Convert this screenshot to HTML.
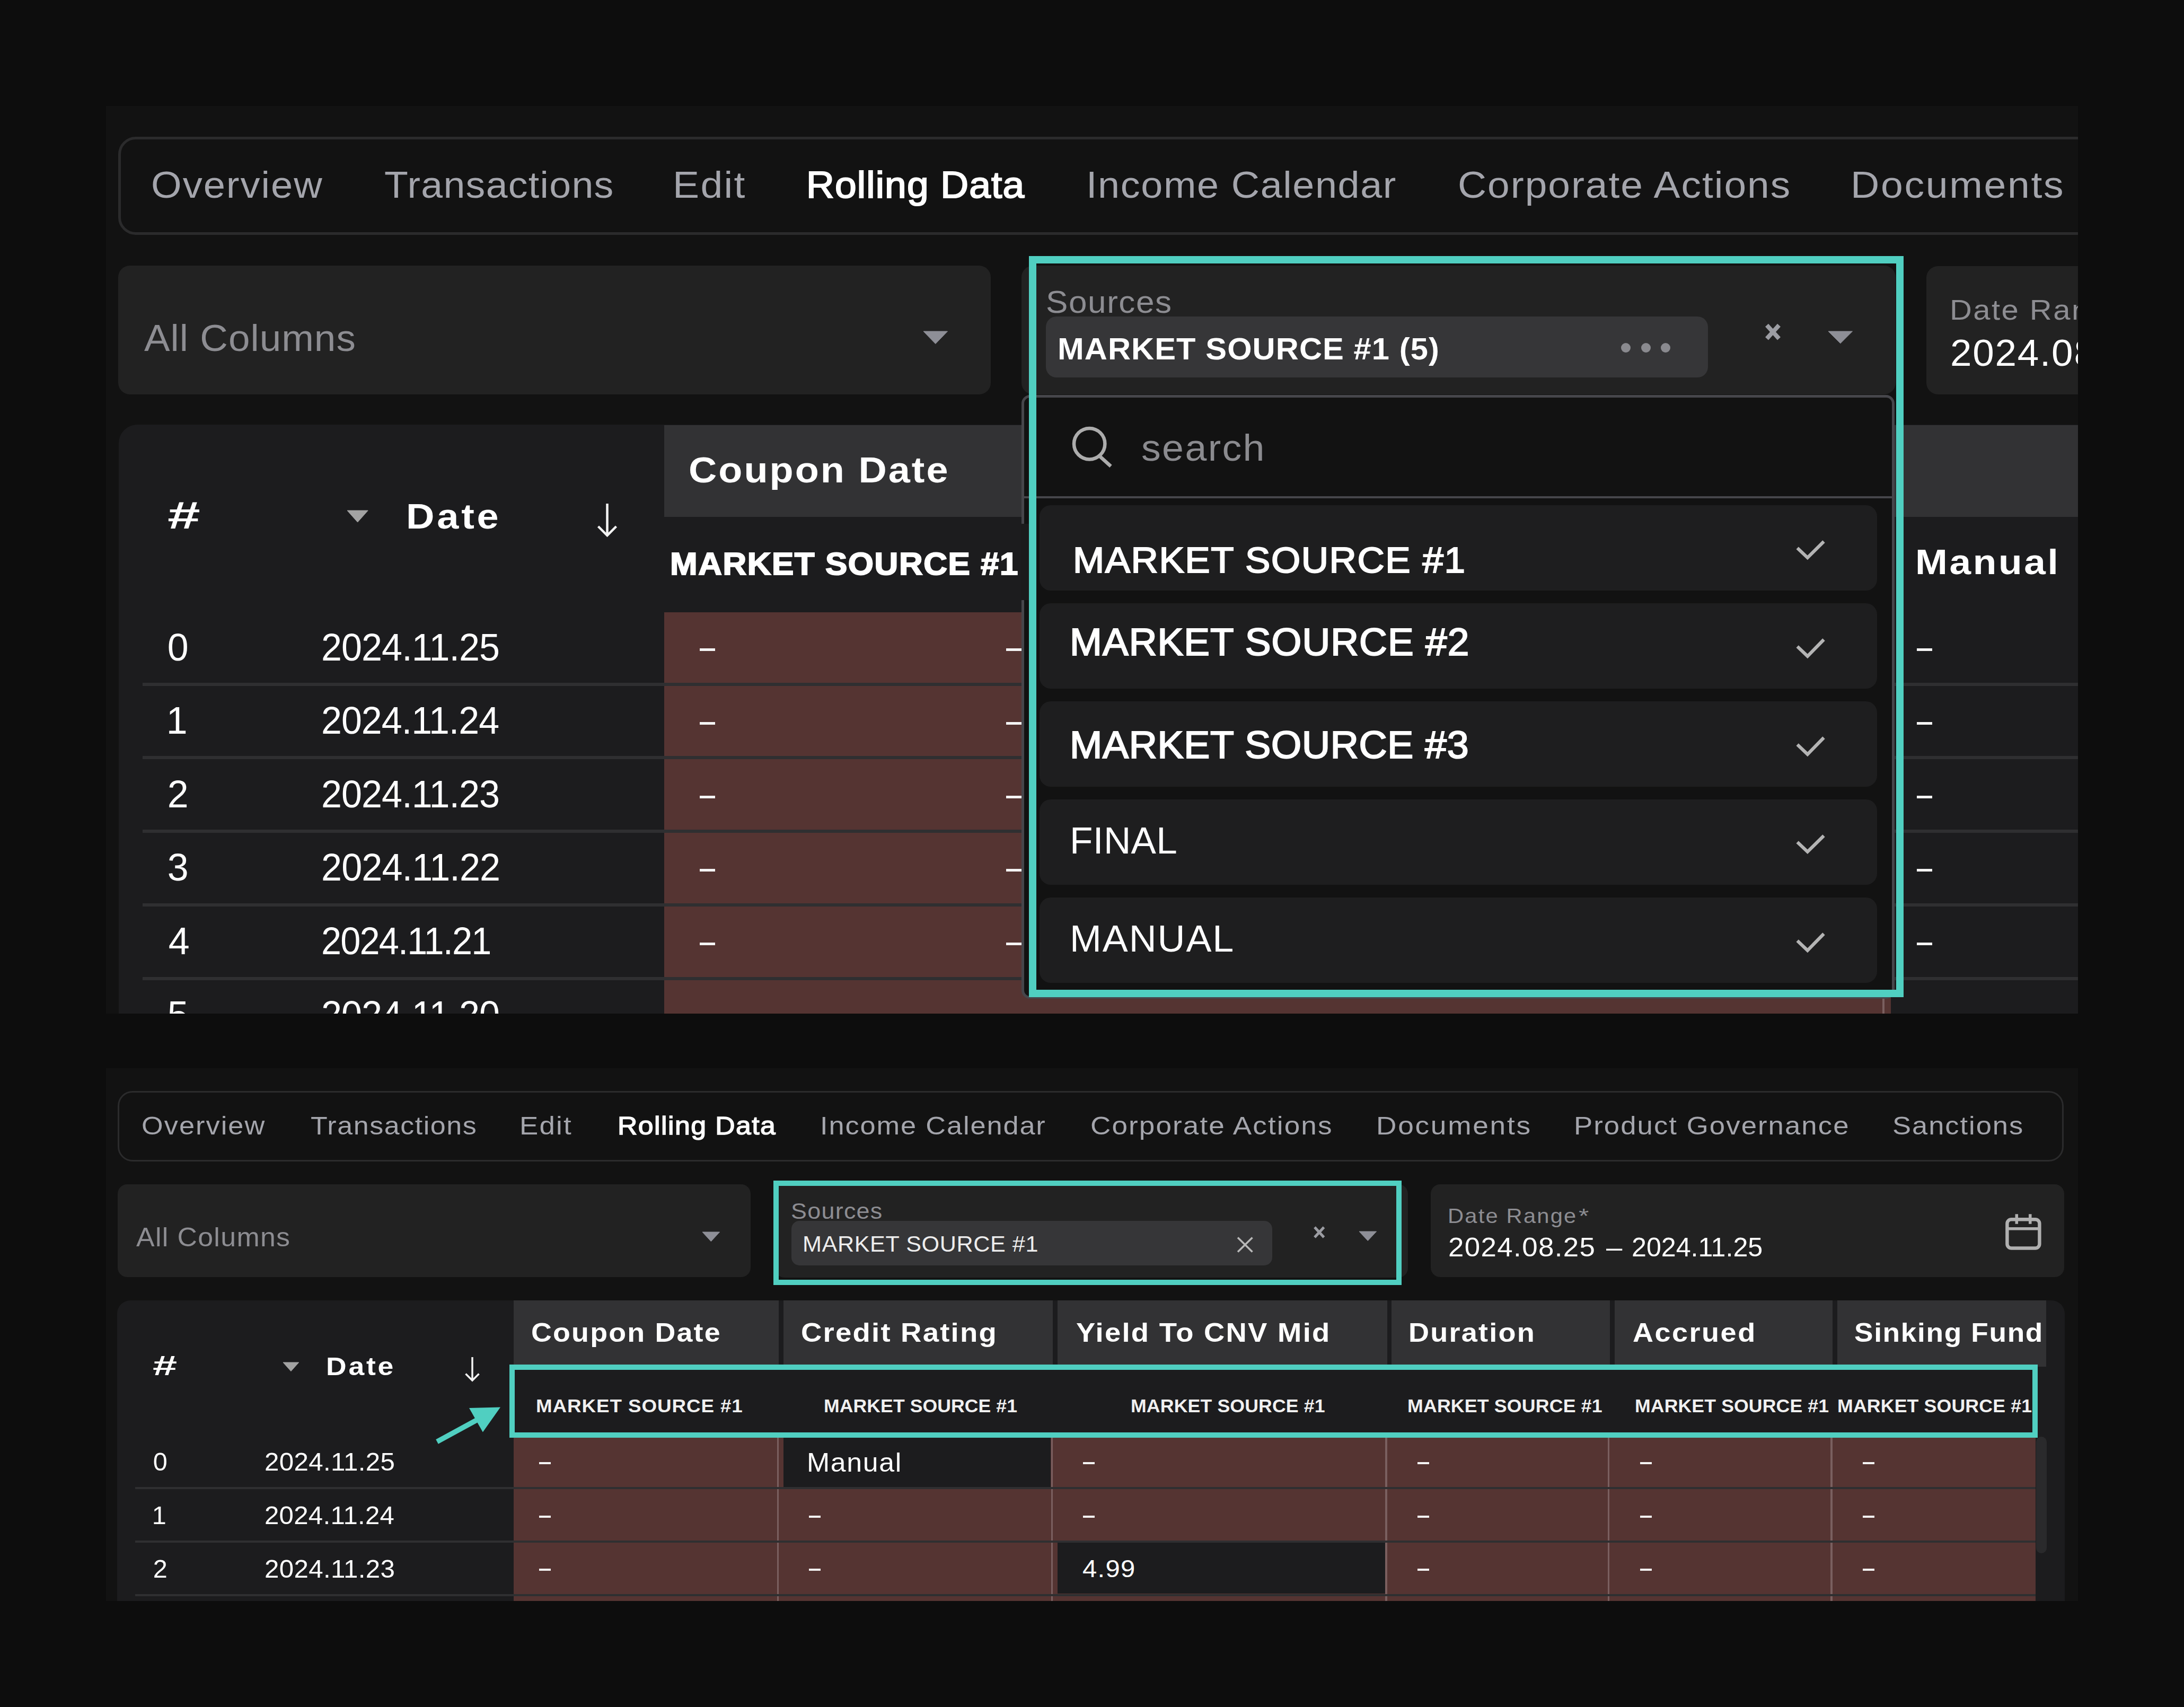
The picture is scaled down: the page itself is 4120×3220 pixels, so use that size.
<!DOCTYPE html>
<html><head><meta charset="utf-8"><style>
html,body{margin:0;padding:0;background:#0d0d0d;width:4120px;height:3220px;overflow:hidden}
.a{position:absolute}
.clip{position:absolute;overflow:hidden}
.off{position:absolute;left:0;top:0}
</style></head><body>
<div class="clip" style="left:200px;top:200px;width:3720px;height:1712px"><div class="off" style="left:-200px;top:-200px">
<div class="a" style="left:200.0px;top:200.0px;width:3720.0px;height:1712.0px;background:#121212;"></div>
<div class="a" style="left:223.0px;top:258.0px;width:3767.0px;height:185.0px;border-radius:33px;box-sizing:border-box;border:5.5px solid #2b2b2c;"></div>
<div class="a" style="left:223.0px;top:501.0px;width:1646.0px;height:243.0px;background:#222222;border-radius:22px;"></div>
<svg class="a" style="left:1740.0px;top:623.0px" width="49.5" height="27.5"><path d="M2 2 L47.5 2 L24.8 25.5 Z" fill="#8e8f97" stroke="#8e8f97" stroke-width="1" stroke-linejoin="round"/></svg>
<div class="a" style="left:1927.0px;top:501.0px;width:1649.0px;height:243.0px;background:#222222;border-radius:22px;"></div>
<div class="a" style="left:1973.4px;top:596.8px;width:1248.6px;height:114.8px;background:#363638;border-radius:20px;"></div>
<div class="a" style="left:3058.0px;top:647.0px;width:18.0px;height:18.0px;background:#8a8a8f;border-radius:9px;"></div>
<div class="a" style="left:3096.0px;top:647.0px;width:18.0px;height:18.0px;background:#8a8a8f;border-radius:9px;"></div>
<div class="a" style="left:3133.0px;top:647.0px;width:18.0px;height:18.0px;background:#8a8a8f;border-radius:9px;"></div>
<svg class="a" style="left:3320.0px;top:600.0px" width="50.0" height="51.0" viewBox="3320 600 50 51"><path d="M3333 613.5 L3356 638.8 M3356 613.5 L3333 638.8" stroke="#9c9da3" stroke-width="8"/></svg>
<svg class="a" style="left:3447.0px;top:623.3px" width="49.5" height="26.7"><path d="M2 2 L47.5 2 L24.8 24.7 Z" fill="#8e8f97" stroke="#8e8f97" stroke-width="1" stroke-linejoin="round"/></svg>
<div class="a" style="left:3634.0px;top:501.5px;width:356.0px;height:242.1px;background:#222222;border-radius:22px;"></div>
<div class="a" style="left:223.5px;top:801.4px;width:3766.5px;height:1188.6px;background:#1c1c1e;border-radius:35px;"></div>
<div class="a" style="left:1253.0px;top:801.5px;width:2667.0px;height:173.0px;background:#323234;"></div>
<div class="a" style="left:1253.0px;top:1154.5px;width:2314.0px;height:757.5px;background:#553432;"></div>
<div class="a" style="left:3551.0px;top:1154.5px;width:4.0px;height:757.5px;background:#7a5f5f;"></div>
<div class="a" style="left:269.0px;top:1287.5px;width:3651.0px;height:6.0px;background:#2f2f31;"></div>
<div class="a" style="left:269.0px;top:1426.4px;width:3651.0px;height:6.0px;background:#2f2f31;"></div>
<div class="a" style="left:269.0px;top:1565.0px;width:3651.0px;height:6.0px;background:#2f2f31;"></div>
<div class="a" style="left:269.0px;top:1704.0px;width:3651.0px;height:6.0px;background:#2f2f31;"></div>
<div class="a" style="left:269.0px;top:1843.0px;width:3651.0px;height:6.0px;background:#2f2f31;"></div>
<svg class="a" style="left:652.5px;top:961.0px" width="43.2" height="26.0"><path d="M2 2 L41.2 2 L21.6 24.0 Z" fill="#a3a3a3" stroke="#a3a3a3" stroke-width="1" stroke-linejoin="round"/></svg>
<svg class="a" style="left:1120.0px;top:940.0px" width="52.0" height="80.0" viewBox="1120 940 52 80"><path d="M1145.5 950 L1145.5 1010 M1128.5 993 L1145.5 1010 L1162.5 993" stroke="#f2f2f2" stroke-width="4.5" fill="none"/></svg>
<div class="a" style="left:1320.0px;top:1222.9px;width:29.0px;height:5.0px;background:#f4f4f4;"></div>
<div class="a" style="left:1898.0px;top:1222.9px;width:29.0px;height:5.0px;background:#f4f4f4;"></div>
<div class="a" style="left:3615.7px;top:1222.9px;width:29.0px;height:5.0px;background:#f4f4f4;"></div>
<div class="a" style="left:1320.0px;top:1361.7px;width:29.0px;height:5.0px;background:#f4f4f4;"></div>
<div class="a" style="left:1898.0px;top:1361.7px;width:29.0px;height:5.0px;background:#f4f4f4;"></div>
<div class="a" style="left:3615.7px;top:1361.7px;width:29.0px;height:5.0px;background:#f4f4f4;"></div>
<div class="a" style="left:1320.0px;top:1500.5px;width:29.0px;height:5.0px;background:#f4f4f4;"></div>
<div class="a" style="left:1898.0px;top:1500.5px;width:29.0px;height:5.0px;background:#f4f4f4;"></div>
<div class="a" style="left:3615.7px;top:1500.5px;width:29.0px;height:5.0px;background:#f4f4f4;"></div>
<div class="a" style="left:1320.0px;top:1639.3px;width:29.0px;height:5.0px;background:#f4f4f4;"></div>
<div class="a" style="left:1898.0px;top:1639.3px;width:29.0px;height:5.0px;background:#f4f4f4;"></div>
<div class="a" style="left:3615.7px;top:1639.3px;width:29.0px;height:5.0px;background:#f4f4f4;"></div>
<div class="a" style="left:1320.0px;top:1778.1px;width:29.0px;height:5.0px;background:#f4f4f4;"></div>
<div class="a" style="left:1898.0px;top:1778.1px;width:29.0px;height:5.0px;background:#f4f4f4;"></div>
<div class="a" style="left:3615.7px;top:1778.1px;width:29.0px;height:5.0px;background:#f4f4f4;"></div>
<div class="a" style="left:1320.0px;top:1916.9px;width:29.0px;height:5.0px;background:#f4f4f4;"></div>
<div class="a" style="left:1898.0px;top:1916.9px;width:29.0px;height:5.0px;background:#f4f4f4;"></div>
<div class="a" style="left:3615.7px;top:1916.9px;width:29.0px;height:5.0px;background:#f4f4f4;"></div>
<div style="position:absolute;left:284.86px;top:313.82px;font-family:'Liberation Sans', sans-serif;font-size:70.80px;line-height:70.80px;font-weight:normal;color:#a4a5ac;white-space:pre;letter-spacing:1.876px;transform:scaleX(1.0471);transform-origin:0 0;">Overview</div>
<div style="position:absolute;left:724.96px;top:313.82px;font-family:'Liberation Sans', sans-serif;font-size:70.80px;line-height:70.80px;font-weight:normal;color:#a4a5ac;white-space:pre;letter-spacing:1.293px;transform:scaleX(1.0370);transform-origin:0 0;">Transactions</div>
<div style="position:absolute;left:1268.64px;top:313.82px;font-family:'Liberation Sans', sans-serif;font-size:70.80px;line-height:70.80px;font-weight:normal;color:#a4a5ac;white-space:pre;letter-spacing:2.201px;transform:scaleX(1.0603);transform-origin:0 0;">Edit</div>
<div style="position:absolute;left:2048.75px;top:313.82px;font-family:'Liberation Sans', sans-serif;font-size:70.80px;line-height:70.80px;font-weight:normal;color:#a4a5ac;white-space:pre;letter-spacing:1.542px;transform:scaleX(1.0423);transform-origin:0 0;">Income Calendar</div>
<div style="position:absolute;left:2749.83px;top:313.82px;font-family:'Liberation Sans', sans-serif;font-size:70.80px;line-height:70.80px;font-weight:normal;color:#a4a5ac;white-space:pre;letter-spacing:1.891px;transform:scaleX(1.0575);transform-origin:0 0;">Corporate Actions</div>
<div style="position:absolute;left:3490.63px;top:313.82px;font-family:'Liberation Sans', sans-serif;font-size:70.80px;line-height:70.80px;font-weight:normal;color:#a4a5ac;white-space:pre;letter-spacing:2.532px;transform:scaleX(1.0614);transform-origin:0 0;">Documents</div>
<div style="position:absolute;left:1521.33px;top:313.82px;font-family:'Liberation Sans', sans-serif;font-size:70.80px;line-height:70.80px;font-weight:normal;color:#ffffff;white-space:pre;letter-spacing:1.122px;-webkit-text-stroke:2.12px #ffffff;transform:scaleX(1.0334);transform-origin:0 0;">Rolling Data</div>
<div style="position:absolute;left:272.00px;top:602.82px;font-family:'Liberation Sans', sans-serif;font-size:70.80px;line-height:70.80px;font-weight:normal;color:#8d8d92;white-space:pre;letter-spacing:1.021px;transform:scaleX(1.0280);transform-origin:0 0;">All Columns</div>
<div style="position:absolute;left:1972.87px;top:539.75px;font-family:'Liberation Sans', sans-serif;font-size:59.47px;line-height:59.47px;font-weight:normal;color:#8d8d92;white-space:pre;letter-spacing:1.493px;transform:scaleX(1.0439);transform-origin:0 0;">Sources</div>
<div style="position:absolute;left:1994.88px;top:630.22px;font-family:'Liberation Sans', sans-serif;font-size:57.97px;line-height:57.97px;font-weight:bold;color:#ffffff;white-space:pre;letter-spacing:1.022px;transform:scaleX(1.0297);transform-origin:0 0;">MARKET SOURCE #1 (5)</div>
<div style="position:absolute;left:3677.69px;top:558.26px;font-family:'Liberation Sans', sans-serif;font-size:53.81px;line-height:53.81px;font-weight:normal;color:#8d8d92;white-space:pre;letter-spacing:2.267px;transform:scaleX(1.0783);transform-origin:0 0;">Date Range</div>
<div style="position:absolute;left:3678.86px;top:631.87px;font-family:'Liberation Sans', sans-serif;font-size:69.57px;line-height:69.57px;font-weight:normal;color:#ffffff;white-space:pre;letter-spacing:1.698px;transform:scaleX(1.0468);transform-origin:0 0;">2024.08.25</div>
<div style="position:absolute;left:316.45px;top:936.54px;font-family:'Liberation Sans', sans-serif;font-size:71.59px;line-height:71.59px;font-weight:bold;color:#ffffff;white-space:pre;letter-spacing:0.000px;transform:scaleX(1.5526);transform-origin:0 0;">#</div>
<div style="position:absolute;left:765.59px;top:940.35px;font-family:'Liberation Sans', sans-serif;font-size:67.12px;line-height:67.12px;font-weight:bold;color:#ffffff;white-space:pre;letter-spacing:4.322px;transform:scaleX(1.1029);transform-origin:0 0;">Date</div>
<div style="position:absolute;left:1298.78px;top:853.11px;font-family:'Liberation Sans', sans-serif;font-size:68.82px;line-height:68.82px;font-weight:bold;color:#ffffff;white-space:pre;letter-spacing:2.845px;transform:scaleX(1.0721);transform-origin:0 0;">Coupon Date</div>
<div style="position:absolute;left:1263.88px;top:1033.97px;font-family:'Liberation Sans', sans-serif;font-size:59.57px;line-height:59.57px;font-weight:bold;color:#ffffff;white-space:pre;letter-spacing:1.520px;-webkit-text-stroke:2.08px #ffffff;transform:scaleX(1.0392);transform-origin:0 0;">MARKET SOURCE #1</div>
<div style="position:absolute;left:3612.67px;top:1026.31px;font-family:'Liberation Sans', sans-serif;font-size:67.40px;line-height:67.40px;font-weight:bold;color:#ffffff;white-space:pre;letter-spacing:3.418px;transform:scaleX(1.0826);transform-origin:0 0;">Manual</div>
<div style="position:absolute;left:315.70px;top:1186.02px;font-family:'Liberation Sans', sans-serif;font-size:71.74px;line-height:71.74px;font-weight:normal;color:#ffffff;white-space:pre;letter-spacing:0.000px;">0</div>
<div style="position:absolute;left:606.07px;top:1186.02px;font-family:'Liberation Sans', sans-serif;font-size:71.74px;line-height:71.74px;font-weight:normal;color:#ffffff;white-space:pre;letter-spacing:-0.939px;transform:scaleX(0.9763);transform-origin:0 0;">2024.11.25</div>
<div style="position:absolute;left:313.70px;top:1324.02px;font-family:'Liberation Sans', sans-serif;font-size:71.74px;line-height:71.74px;font-weight:normal;color:#ffffff;white-space:pre;letter-spacing:0.000px;">1</div>
<div style="position:absolute;left:606.08px;top:1324.02px;font-family:'Liberation Sans', sans-serif;font-size:71.74px;line-height:71.74px;font-weight:normal;color:#ffffff;white-space:pre;letter-spacing:-0.997px;transform:scaleX(0.9749);transform-origin:0 0;">2024.11.24</div>
<div style="position:absolute;left:315.70px;top:1462.52px;font-family:'Liberation Sans', sans-serif;font-size:71.74px;line-height:71.74px;font-weight:normal;color:#ffffff;white-space:pre;letter-spacing:0.000px;">2</div>
<div style="position:absolute;left:606.07px;top:1462.52px;font-family:'Liberation Sans', sans-serif;font-size:71.74px;line-height:71.74px;font-weight:normal;color:#ffffff;white-space:pre;letter-spacing:-0.939px;transform:scaleX(0.9763);transform-origin:0 0;">2024.11.23</div>
<div style="position:absolute;left:315.70px;top:1601.02px;font-family:'Liberation Sans', sans-serif;font-size:71.74px;line-height:71.74px;font-weight:normal;color:#ffffff;white-space:pre;letter-spacing:0.000px;">3</div>
<div style="position:absolute;left:606.07px;top:1601.02px;font-family:'Liberation Sans', sans-serif;font-size:71.74px;line-height:71.74px;font-weight:normal;color:#ffffff;white-space:pre;letter-spacing:-0.881px;transform:scaleX(0.9777);transform-origin:0 0;">2024.11.22</div>
<div style="position:absolute;left:317.70px;top:1740.02px;font-family:'Liberation Sans', sans-serif;font-size:71.74px;line-height:71.74px;font-weight:normal;color:#ffffff;white-space:pre;letter-spacing:0.000px;">4</div>
<div style="position:absolute;left:606.14px;top:1740.02px;font-family:'Liberation Sans', sans-serif;font-size:71.74px;line-height:71.74px;font-weight:normal;color:#ffffff;white-space:pre;letter-spacing:-1.864px;transform:scaleX(0.9539);transform-origin:0 0;">2024.11.21</div>
<div style="position:absolute;left:315.70px;top:1878.52px;font-family:'Liberation Sans', sans-serif;font-size:71.74px;line-height:71.74px;font-weight:normal;color:#ffffff;white-space:pre;letter-spacing:0.000px;">5</div>
<div style="position:absolute;left:606.07px;top:1878.52px;font-family:'Liberation Sans', sans-serif;font-size:71.74px;line-height:71.74px;font-weight:normal;color:#ffffff;white-space:pre;letter-spacing:-0.939px;transform:scaleX(0.9763);transform-origin:0 0;">2024.11.20</div>
<div class="a" style="left:1927.0px;top:745.0px;width:1647.0px;height:1139.0px;background:#121212;border-radius:16px;box-sizing:border-box;border:5.5px solid #46464b;"></div>
<div class="a" style="left:1926.0px;top:988.0px;width:15.0px;height:144.0px;background:#1b1b1c;"></div>
<svg class="a" style="left:2010.0px;top:795.0px" width="100.0" height="95.0" viewBox="2010 795 100 95"><circle cx="2055.2" cy="837.2" r="29.2" stroke="#acacac" stroke-width="6.5" fill="none"/><path d="M2075 861 L2095.5 879.5" stroke="#acacac" stroke-width="6.5"/></svg>
<div class="a" style="left:1930.0px;top:936.0px;width:1641.0px;height:3.5px;background:#46464b;"></div>
<div class="a" style="left:1961.0px;top:952.7px;width:1580.0px;height:161.0px;background:#1e1e1f;border-radius:21px;"></div>
<svg class="a" style="left:3380.0px;top:1008.8px" width="72.0" height="54.2" viewBox="3380 1008.8 72 54.200000000000045"><path d="M3390.6 1033.5 L3409.8 1051.8 L3440.5 1021.3" stroke="#b4b4b4" stroke-width="6.2" fill="none"/></svg>
<div class="a" style="left:1961.0px;top:1137.5px;width:1580.0px;height:161.0px;background:#1e1e1f;border-radius:21px;"></div>
<svg class="a" style="left:3380.0px;top:1194.0px" width="72.0" height="55.0" viewBox="3380 1194 72 55"><path d="M3390.6 1219.5 L3409.8 1237.8 L3440.5 1206.5" stroke="#b4b4b4" stroke-width="6.2" fill="none"/></svg>
<div class="a" style="left:1961.0px;top:1322.7px;width:1580.0px;height:161.0px;background:#1e1e1f;border-radius:21px;"></div>
<svg class="a" style="left:3380.0px;top:1379.0px" width="72.0" height="55.0" viewBox="3380 1379 72 55"><path d="M3390.6 1404.5 L3409.8 1422.8 L3440.5 1391.5" stroke="#b4b4b4" stroke-width="6.2" fill="none"/></svg>
<div class="a" style="left:1961.0px;top:1507.8px;width:1580.0px;height:161.0px;background:#1e1e1f;border-radius:21px;"></div>
<svg class="a" style="left:3380.0px;top:1564.0px" width="72.0" height="54.0" viewBox="3380 1564 72 54"><path d="M3390.6 1588.5 L3409.8 1606.8 L3440.5 1576.5" stroke="#b4b4b4" stroke-width="6.2" fill="none"/></svg>
<div class="a" style="left:1961.0px;top:1693.0px;width:1580.0px;height:161.0px;background:#1e1e1f;border-radius:21px;"></div>
<svg class="a" style="left:3380.0px;top:1749.0px" width="72.0" height="55.0" viewBox="3380 1749 72 55"><path d="M3390.6 1774.5 L3409.8 1792.8 L3440.5 1761.5" stroke="#b4b4b4" stroke-width="6.2" fill="none"/></svg>
<div style="position:absolute;left:2153.38px;top:810.92px;font-family:'Liberation Sans', sans-serif;font-size:69.50px;line-height:69.50px;font-weight:normal;color:#8b8b8f;white-space:pre;letter-spacing:2.221px;transform:scaleX(1.0582);transform-origin:0 0;">search</div>
<div style="position:absolute;left:2023.57px;top:1023.01px;font-family:'Liberation Sans', sans-serif;font-size:68.70px;line-height:68.70px;font-weight:normal;color:#ffffff;white-space:pre;letter-spacing:1.493px;-webkit-text-stroke:2.06px #ffffff;transform:scaleX(1.0337);transform-origin:0 0;">MARKET SOURCE #1</div>
<div style="position:absolute;left:2018.39px;top:1176.27px;font-family:'Liberation Sans', sans-serif;font-size:71.45px;line-height:71.45px;font-weight:normal;color:#ffffff;white-space:pre;letter-spacing:1.043px;-webkit-text-stroke:2.14px #ffffff;transform:scaleX(1.0224);transform-origin:0 0;">MARKET SOURCE #2</div>
<div style="position:absolute;left:2018.43px;top:1369.41px;font-family:'Liberation Sans', sans-serif;font-size:72.46px;line-height:72.46px;font-weight:normal;color:#ffffff;white-space:pre;letter-spacing:0.690px;-webkit-text-stroke:2.17px #ffffff;transform:scaleX(1.0145);transform-origin:0 0;">MARKET SOURCE #3</div>
<div style="position:absolute;left:2018.45px;top:1551.43px;font-family:'Liberation Sans', sans-serif;font-size:70.43px;line-height:70.43px;font-weight:normal;color:#ffffff;white-space:pre;letter-spacing:0.397px;transform:scaleX(1.0084);transform-origin:0 0;">FINAL</div>
<div style="position:absolute;left:2018.30px;top:1736.87px;font-family:'Liberation Sans', sans-serif;font-size:69.57px;line-height:69.57px;font-weight:normal;color:#ffffff;white-space:pre;letter-spacing:1.847px;transform:scaleX(1.0339);transform-origin:0 0;">MANUAL</div>
<div class="a" style="left:1941.0px;top:483.0px;width:1649.5px;height:1397.5px;box-sizing:border-box;border:14.5px solid #50cfc1;"></div>
</div></div>
<div class="clip" style="left:200px;top:2014.5px;width:3720px;height:1005.5px"><div class="off" style="left:-200px;top:-2014.5px">
<div class="a" style="left:200.0px;top:2014.5px;width:3720.0px;height:1005.5px;background:#121212;"></div>
<div class="a" style="left:221.6px;top:2057.5px;width:3671.4px;height:133.0px;border-radius:28px;box-sizing:border-box;border:3.5px solid #2b2b2c;"></div>
<div class="a" style="left:221.6px;top:2233.5px;width:1194.9px;height:175.5px;background:#222222;border-radius:18px;"></div>
<svg class="a" style="left:1323.0px;top:2321.8px" width="36.6" height="21.7"><path d="M2 2 L34.6 2 L18.3 19.7 Z" fill="#8e8f97" stroke="#8e8f97" stroke-width="1" stroke-linejoin="round"/></svg>
<div class="a" style="left:1462.0px;top:2234.0px;width:1194.0px;height:175.5px;background:#222222;border-radius:18px;"></div>
<div class="a" style="left:1492.8px;top:2303.0px;width:907.2px;height:83.7px;background:#363638;border-radius:15px;"></div>
<svg class="a" style="left:2325.0px;top:2325.0px" width="47.0" height="46.0" viewBox="2325 2325 47 46"><path d="M2335 2334.5 L2362.5 2361.5 M2362.5 2334.5 L2335 2361.5" stroke="#b9b9b9" stroke-width="3.6"/></svg>
<svg class="a" style="left:2470.0px;top:2305.0px" width="38.0" height="39.0" viewBox="2470 2305 38 39"><path d="M2480 2315 L2497.5 2334 M2497.5 2315 L2480 2334" stroke="#9c9da3" stroke-width="5"/></svg>
<svg class="a" style="left:2562.4px;top:2321.0px" width="36.6" height="21.4"><path d="M2 2 L34.6 2 L18.3 19.4 Z" fill="#8e8f97" stroke="#8e8f97" stroke-width="1" stroke-linejoin="round"/></svg>
<div class="a" style="left:2699.0px;top:2233.7px;width:1195.0px;height:175.5px;background:#222222;border-radius:18px;"></div>
<svg class="a" style="left:3775.0px;top:2282.0px" width="85.0" height="84.0" viewBox="3775 2282 85 84"><rect x="3786.4" y="2300.2" width="61" height="54.3" rx="8" stroke="#b0b0b0" stroke-width="6.4" fill="none"/><path d="M3786 2317.7 L3848 2317.7 M3804.3 2290.3 L3804.3 2308.7 M3829.8 2290.3 L3829.8 2308.7" stroke="#b0b0b0" stroke-width="5.5"/></svg>
<div class="a" style="left:220.6px;top:2452.7px;width:3674.4px;height:627.3px;background:#1c1c1e;border-radius:25px;"></div>
<div class="a" style="left:969.0px;top:2452.7px;width:499.8px;height:125.3px;background:#323234;"></div>
<div class="a" style="left:1477.8px;top:2452.7px;width:508.2px;height:125.3px;background:#323234;"></div>
<div class="a" style="left:1995.0px;top:2452.7px;width:622.3px;height:125.3px;background:#323234;"></div>
<div class="a" style="left:2625.0px;top:2452.7px;width:412.0px;height:125.3px;background:#323234;"></div>
<div class="a" style="left:3046.0px;top:2452.7px;width:411.4px;height:125.3px;background:#323234;"></div>
<div class="a" style="left:3465.6px;top:2452.7px;width:394.9px;height:125.3px;background:#323234;"></div>
<div class="a" style="left:969.0px;top:2712.0px;width:2871.0px;height:308.0px;background:#553432;"></div>
<div class="a" style="left:1477.8px;top:2712.0px;width:504.7px;height:93.0px;background:#1c1c1e;"></div>
<div class="a" style="left:1995.0px;top:2909.5px;width:618.8px;height:96.2px;background:#1c1c1e;"></div>
<div class="a" style="left:1465.5px;top:2712.0px;width:3.5px;height:308.0px;background:#7a5f5f;"></div>
<div class="a" style="left:1982.5px;top:2712.0px;width:3.5px;height:308.0px;background:#7a5f5f;"></div>
<div class="a" style="left:2613.1px;top:2712.0px;width:3.5px;height:308.0px;background:#7a5f5f;"></div>
<div class="a" style="left:3032.8px;top:2712.0px;width:3.5px;height:308.0px;background:#7a5f5f;"></div>
<div class="a" style="left:3453.2px;top:2712.0px;width:3.5px;height:308.0px;background:#7a5f5f;"></div>
<div class="a" style="left:254.8px;top:2805.0px;width:3585.2px;height:4.0px;background:#2f2f31;"></div>
<div class="a" style="left:254.8px;top:2905.5px;width:3585.2px;height:4.0px;background:#2f2f31;"></div>
<div class="a" style="left:254.8px;top:3006.5px;width:3585.2px;height:4.0px;background:#2f2f31;"></div>
<div class="a" style="left:1017.0px;top:2758.0px;width:22.0px;height:4.0px;background:#f4f4f4;"></div>
<div class="a" style="left:2043.2px;top:2758.0px;width:22.0px;height:4.0px;background:#f4f4f4;"></div>
<div class="a" style="left:2673.7px;top:2758.0px;width:22.0px;height:4.0px;background:#f4f4f4;"></div>
<div class="a" style="left:3093.8px;top:2758.0px;width:22.0px;height:4.0px;background:#f4f4f4;"></div>
<div class="a" style="left:3514.0px;top:2758.0px;width:22.0px;height:4.0px;background:#f4f4f4;"></div>
<div class="a" style="left:1017.0px;top:2858.5px;width:22.0px;height:4.0px;background:#f4f4f4;"></div>
<div class="a" style="left:1525.7px;top:2858.5px;width:22.0px;height:4.0px;background:#f4f4f4;"></div>
<div class="a" style="left:2043.2px;top:2858.5px;width:22.0px;height:4.0px;background:#f4f4f4;"></div>
<div class="a" style="left:2673.7px;top:2858.5px;width:22.0px;height:4.0px;background:#f4f4f4;"></div>
<div class="a" style="left:3093.8px;top:2858.5px;width:22.0px;height:4.0px;background:#f4f4f4;"></div>
<div class="a" style="left:3514.0px;top:2858.5px;width:22.0px;height:4.0px;background:#f4f4f4;"></div>
<div class="a" style="left:1017.0px;top:2959.0px;width:22.0px;height:4.0px;background:#f4f4f4;"></div>
<div class="a" style="left:1525.7px;top:2959.0px;width:22.0px;height:4.0px;background:#f4f4f4;"></div>
<div class="a" style="left:2673.7px;top:2959.0px;width:22.0px;height:4.0px;background:#f4f4f4;"></div>
<div class="a" style="left:3093.8px;top:2959.0px;width:22.0px;height:4.0px;background:#f4f4f4;"></div>
<div class="a" style="left:3514.0px;top:2959.0px;width:22.0px;height:4.0px;background:#f4f4f4;"></div>
<svg class="a" style="left:531.8px;top:2568.0px" width="33.7" height="20.6"><path d="M2 2 L31.7 2 L16.9 18.6 Z" fill="#a3a3a3" stroke="#a3a3a3" stroke-width="1" stroke-linejoin="round"/></svg>
<svg class="a" style="left:870.0px;top:2550.0px" width="42.0" height="62.0" viewBox="870 2550 42 62"><path d="M891 2560 L891 2604 M878.5 2591.5 L891 2604 L903.5 2591.5" stroke="#f2f2f2" stroke-width="3.5" fill="none"/></svg>
<div class="a" style="left:3841.0px;top:2709.5px;width:19.5px;height:220.5px;background:#2a2a2c;border-radius:10px;"></div>
<div class="a" style="left:961.0px;top:2574.0px;width:2882.6px;height:138.0px;box-sizing:border-box;border:10.5px solid #50cfc1;"></div>
<svg class="a" style="left:815.0px;top:2640.0px" width="140.0" height="90.0" viewBox="815 2640 140 90"><path d="M824.5 2719.5 L908 2674" stroke="#50cfc1" stroke-width="9.5"/><path d="M885 2656 L944 2654.5 L910.8 2701.4 Z" fill="#50cfc1"/></svg>
<div style="position:absolute;left:267.36px;top:2099.48px;font-family:'Liberation Sans', sans-serif;font-size:48.85px;line-height:48.85px;font-weight:normal;color:#a4a5ac;white-space:pre;letter-spacing:1.902px;transform:scaleX(1.0705);transform-origin:0 0;">Overview</div>
<div style="position:absolute;left:585.74px;top:2099.48px;font-family:'Liberation Sans', sans-serif;font-size:48.85px;line-height:48.85px;font-weight:normal;color:#a4a5ac;white-space:pre;letter-spacing:1.484px;transform:scaleX(1.0631);transform-origin:0 0;">Transactions</div>
<div style="position:absolute;left:980.27px;top:2099.48px;font-family:'Liberation Sans', sans-serif;font-size:48.85px;line-height:48.85px;font-weight:normal;color:#a4a5ac;white-space:pre;letter-spacing:2.032px;transform:scaleX(1.0825);transform-origin:0 0;">Edit</div>
<div style="position:absolute;left:1547.21px;top:2099.48px;font-family:'Liberation Sans', sans-serif;font-size:48.85px;line-height:48.85px;font-weight:normal;color:#a4a5ac;white-space:pre;letter-spacing:1.750px;transform:scaleX(1.0715);transform-origin:0 0;">Income Calendar</div>
<div style="position:absolute;left:2056.53px;top:2099.48px;font-family:'Liberation Sans', sans-serif;font-size:48.85px;line-height:48.85px;font-weight:normal;color:#a4a5ac;white-space:pre;letter-spacing:1.924px;transform:scaleX(1.0869);transform-origin:0 0;">Corporate Actions</div>
<div style="position:absolute;left:2596.14px;top:2099.48px;font-family:'Liberation Sans', sans-serif;font-size:48.85px;line-height:48.85px;font-weight:normal;color:#a4a5ac;white-space:pre;letter-spacing:2.494px;transform:scaleX(1.0902);transform-origin:0 0;">Documents</div>
<div style="position:absolute;left:2968.68px;top:2099.48px;font-family:'Liberation Sans', sans-serif;font-size:48.85px;line-height:48.85px;font-weight:normal;color:#a4a5ac;white-space:pre;letter-spacing:1.908px;transform:scaleX(1.0792);transform-origin:0 0;">Product Governance</div>
<div style="position:absolute;left:3569.65px;top:2099.48px;font-family:'Liberation Sans', sans-serif;font-size:48.85px;line-height:48.85px;font-weight:normal;color:#a4a5ac;white-space:pre;letter-spacing:1.832px;transform:scaleX(1.0746);transform-origin:0 0;">Sanctions</div>
<div style="position:absolute;left:1164.52px;top:2099.48px;font-family:'Liberation Sans', sans-serif;font-size:48.85px;line-height:48.85px;font-weight:normal;color:#ffffff;white-space:pre;letter-spacing:1.359px;-webkit-text-stroke:1.47px #ffffff;transform:scaleX(1.0600);transform-origin:0 0;">Rolling Data</div>
<div style="position:absolute;left:256.90px;top:2309.41px;font-family:'Liberation Sans', sans-serif;font-size:49.28px;line-height:49.28px;font-weight:normal;color:#8d8d92;white-space:pre;letter-spacing:1.288px;transform:scaleX(1.0519);transform-origin:0 0;">All Columns</div>
<div style="position:absolute;left:1491.90px;top:2262.65px;font-family:'Liberation Sans', sans-serif;font-size:42.76px;line-height:42.76px;font-weight:normal;color:#8d8d92;white-space:pre;letter-spacing:1.215px;transform:scaleX(1.0497);transform-origin:0 0;">Sources</div>
<div style="position:absolute;left:1514.44px;top:2325.83px;font-family:'Liberation Sans', sans-serif;font-size:42.32px;line-height:42.32px;font-weight:normal;color:#ededed;white-space:pre;letter-spacing:0.562px;transform:scaleX(1.0204);transform-origin:0 0;">MARKET SOURCE #1</div>
<div style="position:absolute;left:2730.60px;top:2275.54px;font-family:'Liberation Sans', sans-serif;font-size:37.95px;line-height:37.95px;font-weight:normal;color:#8d8d92;white-space:pre;letter-spacing:1.986px;transform:scaleX(1.0992);transform-origin:0 0;">Date Range</div>
<div style="position:absolute;left:2978.02px;top:2274.79px;font-family:'Liberation Sans', sans-serif;font-size:38.84px;line-height:38.84px;font-weight:normal;color:#8d8d92;white-space:pre;letter-spacing:0.000px;transform:scaleX(1.2786);transform-origin:0 0;">*</div>
<div style="position:absolute;left:2731.80px;top:2328.35px;font-family:'Liberation Sans', sans-serif;font-size:50.29px;line-height:50.29px;font-weight:normal;color:#ffffff;white-space:pre;letter-spacing:1.327px;transform:scaleX(1.0506);transform-origin:0 0;">2024.08.25</div>
<div style="position:absolute;left:3029.70px;top:2328.35px;font-family:'Liberation Sans', sans-serif;font-size:50.29px;line-height:50.29px;font-weight:normal;color:#ffffff;white-space:pre;letter-spacing:0.000px;transform:scaleX(1.0821);transform-origin:0 0;">–</div>
<div style="position:absolute;left:3078.00px;top:2328.35px;font-family:'Liberation Sans', sans-serif;font-size:50.29px;line-height:50.29px;font-weight:normal;color:#ffffff;white-space:pre;letter-spacing:-0.039px;transform:scaleX(0.9986);transform-origin:0 0;">2024.11.25</div>
<div style="position:absolute;left:288.21px;top:2550.35px;font-family:'Liberation Sans', sans-serif;font-size:52.17px;line-height:52.17px;font-weight:bold;color:#ffffff;white-space:pre;letter-spacing:0.000px;transform:scaleX(1.5889);transform-origin:0 0;">#</div>
<div style="position:absolute;left:614.96px;top:2553.90px;font-family:'Liberation Sans', sans-serif;font-size:48.00px;line-height:48.00px;font-weight:bold;color:#ffffff;white-space:pre;letter-spacing:3.398px;transform:scaleX(1.1135);transform-origin:0 0;">Date</div>
<div style="position:absolute;left:1002.26px;top:2489.27px;font-family:'Liberation Sans', sans-serif;font-size:50.27px;line-height:50.27px;font-weight:bold;color:#ffffff;white-space:pre;letter-spacing:2.036px;transform:scaleX(1.0706);transform-origin:0 0;">Coupon Date</div>
<div style="position:absolute;left:1510.83px;top:2489.27px;font-family:'Liberation Sans', sans-serif;font-size:50.27px;line-height:50.27px;font-weight:bold;color:#ffffff;white-space:pre;letter-spacing:2.024px;transform:scaleX(1.0850);transform-origin:0 0;">Credit Rating</div>
<div style="position:absolute;left:2029.52px;top:2489.27px;font-family:'Liberation Sans', sans-serif;font-size:50.27px;line-height:50.27px;font-weight:bold;color:#ffffff;white-space:pre;letter-spacing:2.074px;transform:scaleX(1.0830);transform-origin:0 0;">Yield To CNV Mid</div>
<div style="position:absolute;left:2656.77px;top:2489.27px;font-family:'Liberation Sans', sans-serif;font-size:50.27px;line-height:50.27px;font-weight:bold;color:#ffffff;white-space:pre;letter-spacing:2.043px;transform:scaleX(1.0766);transform-origin:0 0;">Duration</div>
<div style="position:absolute;left:3079.92px;top:2489.27px;font-family:'Liberation Sans', sans-serif;font-size:50.27px;line-height:50.27px;font-weight:bold;color:#ffffff;white-space:pre;letter-spacing:2.302px;transform:scaleX(1.0754);transform-origin:0 0;">Accrued</div>
<div style="position:absolute;left:3497.88px;top:2489.27px;font-family:'Liberation Sans', sans-serif;font-size:50.27px;line-height:50.27px;font-weight:bold;color:#ffffff;white-space:pre;letter-spacing:1.576px;transform:scaleX(1.0586);transform-origin:0 0;">Sinking Fund</div>
<div style="position:absolute;left:1010.93px;top:2635.32px;font-family:'Liberation Sans', sans-serif;font-size:35.51px;line-height:35.51px;font-weight:bold;color:#f0f0f0;white-space:pre;letter-spacing:0.861px;transform:scaleX(1.0372);transform-origin:0 0;">MARKET SOURCE #1</div>
<div style="position:absolute;left:1553.89px;top:2635.32px;font-family:'Liberation Sans', sans-serif;font-size:35.51px;line-height:35.51px;font-weight:bold;color:#f0f0f0;white-space:pre;letter-spacing:0.070px;transform:scaleX(1.0029);transform-origin:0 0;">MARKET SOURCE #1</div>
<div style="position:absolute;left:2133.29px;top:2635.32px;font-family:'Liberation Sans', sans-serif;font-size:35.51px;line-height:35.51px;font-weight:bold;color:#f0f0f0;white-space:pre;letter-spacing:0.123px;transform:scaleX(1.0051);transform-origin:0 0;">MARKET SOURCE #1</div>
<div style="position:absolute;left:2654.59px;top:2635.32px;font-family:'Liberation Sans', sans-serif;font-size:35.51px;line-height:35.51px;font-weight:bold;color:#f0f0f0;white-space:pre;letter-spacing:0.156px;transform:scaleX(1.0065);transform-origin:0 0;">MARKET SOURCE #1</div>
<div style="position:absolute;left:3083.59px;top:2635.32px;font-family:'Liberation Sans', sans-serif;font-size:35.51px;line-height:35.51px;font-weight:bold;color:#f0f0f0;white-space:pre;letter-spacing:0.103px;transform:scaleX(1.0043);transform-origin:0 0;">MARKET SOURCE #1</div>
<div style="position:absolute;left:3465.69px;top:2635.32px;font-family:'Liberation Sans', sans-serif;font-size:35.51px;line-height:35.51px;font-weight:bold;color:#f0f0f0;white-space:pre;letter-spacing:0.136px;transform:scaleX(1.0057);transform-origin:0 0;">MARKET SOURCE #1</div>
<div style="position:absolute;left:288.70px;top:2733.23px;font-family:'Liberation Sans', sans-serif;font-size:48.55px;line-height:48.55px;font-weight:normal;color:#ffffff;white-space:pre;letter-spacing:0.000px;">0</div>
<div style="position:absolute;left:498.77px;top:2733.23px;font-family:'Liberation Sans', sans-serif;font-size:48.55px;line-height:48.55px;font-weight:normal;color:#ffffff;white-space:pre;letter-spacing:0.356px;transform:scaleX(1.0138);transform-origin:0 0;">2024.11.25</div>
<div style="position:absolute;left:286.70px;top:2834.03px;font-family:'Liberation Sans', sans-serif;font-size:48.55px;line-height:48.55px;font-weight:normal;color:#ffffff;white-space:pre;letter-spacing:0.000px;">1</div>
<div style="position:absolute;left:498.78px;top:2834.03px;font-family:'Liberation Sans', sans-serif;font-size:48.55px;line-height:48.55px;font-weight:normal;color:#ffffff;white-space:pre;letter-spacing:0.302px;transform:scaleX(1.0117);transform-origin:0 0;">2024.11.24</div>
<div style="position:absolute;left:288.70px;top:2934.73px;font-family:'Liberation Sans', sans-serif;font-size:48.55px;line-height:48.55px;font-weight:normal;color:#ffffff;white-space:pre;letter-spacing:0.000px;">2</div>
<div style="position:absolute;left:498.77px;top:2934.73px;font-family:'Liberation Sans', sans-serif;font-size:48.55px;line-height:48.55px;font-weight:normal;color:#ffffff;white-space:pre;letter-spacing:0.356px;transform:scaleX(1.0138);transform-origin:0 0;">2024.11.23</div>
<div style="position:absolute;left:1522.49px;top:2733.61px;font-family:'Liberation Sans', sans-serif;font-size:49.28px;line-height:49.28px;font-weight:normal;color:#ffffff;white-space:pre;letter-spacing:1.549px;transform:scaleX(1.0526);transform-origin:0 0;">Manual</div>
<div style="position:absolute;left:2041.95px;top:2935.71px;font-family:'Liberation Sans', sans-serif;font-size:46.81px;line-height:46.81px;font-weight:normal;color:#ffffff;white-space:pre;letter-spacing:1.275px;transform:scaleX(1.0455);transform-origin:0 0;">4.99</div>
<div class="a" style="left:1459.0px;top:2227.3px;width:1185.0px;height:196.7px;box-sizing:border-box;border:10.5px solid #50cfc1;"></div>
</div></div>
</body></html>
